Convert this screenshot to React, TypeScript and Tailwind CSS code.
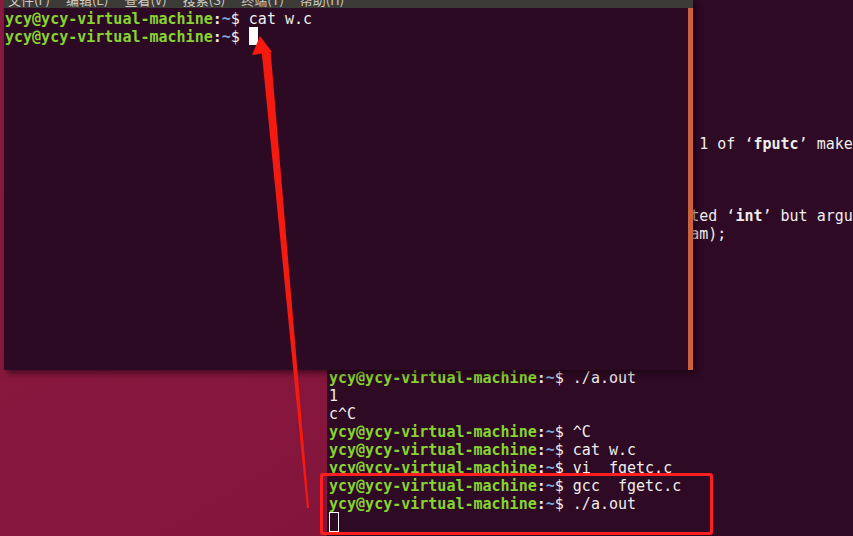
import React from 'react';

const MONO = { fontFamily: '"DejaVu Sans Mono", "Liberation Mono", monospace' };

function Prompt() {
  return (
    <>
      <span className="font-bold text-[#87d430]">ycy@ycy-virtual-machine</span>
      <span className="font-bold text-[#eeeeec]">:</span>
      <span className="font-bold text-[#7aa5d8]">~</span>
      <span className="text-[#eeeeec]">$ </span>
    </>
  );
}

type Line = { prompt?: boolean; text?: React.ReactNode };

const BACK_LINES: Line[] = [
  { prompt: true, text: 'vi  fgetc.c' },
  { prompt: true, text: 'gcc  fgetc.c' },
  { text: 'fgetc.c: In function ‘main’:' },
  { text: 'fgetc.c:8:5: warning: implicit' },
  { text: '     fputc(ch);' },
  { text: '     ^~~~~' },
  { text: 'In file included from fgetc.c:1:0:' },
  { text: 'fgetc.c: In function ‘main’:' },
  {
    text: (
      <>
        fgetc.c:10:12: warning: passing argument 1 of ‘<b>fputc</b>’ makes integer from pointer without a cast [-Wint-conversion]
      </>
    ),
  },
  { text: '     fputc(buf, stdout);' },
  { text: '           ^~~' },
  { text: 'In file included from fgetc.c:1:0:' },
  {
    text: (
      <>
        /usr/include/stdio.h:573:12: note: expected ‘<b>int</b>’ but argument is of type ‘<b>char *</b>’
      </>
    ),
  },
  { text: ' extern int fputc (int __c, FILE *__stream);' },
  { text: '            ^~~~~' },
  { text: 'fgetc.c:10:2: error: too few' },
  { text: '  fputc(buf);' },
  { text: '  ^~~~~' },
  { text: '' },
  { prompt: true, text: 'gcc  fgetc.c' },
  { prompt: true, text: 'vi  fgetc.c' },
  { prompt: true, text: './a.out' },
  { text: '1' },
  { text: 'c^C' },
  { prompt: true, text: '^C' },
  { prompt: true, text: 'cat w.c' },
  { prompt: true, text: 'vi  fgetc.c' },
  { prompt: true, text: 'gcc  fgetc.c' },
  { prompt: true, text: './a.out' },
];

const MENU = ['文件(F)', '编辑(E)', '查看(V)', '搜索(S)', '终端(T)', '帮助(H)'];

export default function App() {
  return (
    <div className="relative w-[853px] h-[536px] overflow-hidden bg-gradient-to-br from-[#8e1a42] to-[#7e1238]">
      {/* back terminal */}
      <div
        className="absolute left-[327px] top-0 right-0 bottom-0 bg-[#2e0a24] overflow-hidden text-[15px] leading-[18px] text-[#eeeeec]"
        style={MONO}
      >
        <div className="-mt-[9px] pl-[2px] flex flex-col">
          {BACK_LINES.map((l, i) => (
            <div key={i} className="h-[18px] whitespace-pre">
              {l.prompt && <Prompt />}
              {l.text}
            </div>
          ))}
          <div className="h-[18px] flex">
            <span className="w-[10px] h-[20px] -mt-[1px] border border-white" />
          </div>
        </div>
      </div>

      {/* front terminal */}
      <div className="absolute left-[4px] top-0 w-[689px] h-[370px] flex flex-col bg-[#2d0a23] shadow-[3px_3px_6px_rgba(20,0,12,0.6)]">
        <div className="h-[8px] bg-[#3c3b37] overflow-hidden">
          <div
            className="flex gap-[16px] pl-[4px] -mt-[8px] text-[13px] leading-[16px] text-[#cfcbc2] whitespace-nowrap"
            style={{ fontFamily: '"Noto Sans CJK SC", "Noto Sans", sans-serif' }}
          >
            {MENU.map((m) => (
              <span key={m}>{m}</span>
            ))}
          </div>
        </div>
        <div className="flex-1 flex">
          <div className="flex-1 pt-[2px] pl-[1px] text-[15px] leading-[18px] text-[#eeeeec]" style={MONO}>
            <div className="h-[18px] whitespace-pre">
              <Prompt />
              cat w.c
            </div>
            <div className="h-[18px] whitespace-pre flex">
              <span>
                <Prompt />
              </span>
              <span className="w-[9px] h-[18px] -mt-[1px] bg-white" />
            </div>
          </div>
          <div className="w-[5px] bg-[#cc613b]" />
        </div>
      </div>

      {/* red highlight box */}
      <div className="absolute left-[320px] top-[473px] w-[393px] h-[62px] border-[3px] border-[#ff1f1f] rounded-[3px]" />

      {/* red arrow */}
      <svg className="absolute left-0 top-0" width="853" height="536" viewBox="0 0 853 536">
        <polygon points="261.5,50 270.5,50 309,508 307,508" fill="#f51a10" />
        <polygon points="260,36 252,55 272,52" fill="#f51a10" />
      </svg>
    </div>
  );
}
